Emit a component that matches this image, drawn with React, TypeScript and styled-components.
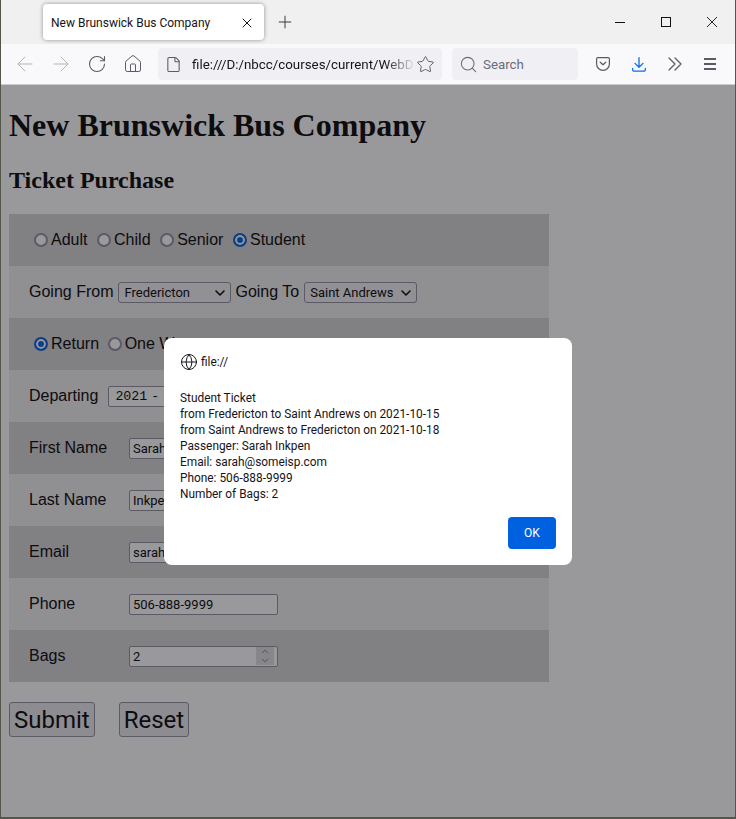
import React from "react";
import styled, { createGlobalStyle } from "styled-components";
import { ArrowLeft, ArrowRight, ChevronDown, ChevronUp, File, Globe, Home, Plus, RotateCw, Search, Star, X } from "lucide-react";

const UI_FONT = `Roboto, "Noto Sans", sans-serif`;

const GlobalStyle = createGlobalStyle`
  html, body {
    margin: 0;
    padding: 0;
    height: 819px;
    overflow: hidden;
    background: #55564a;
  }
`;

const Desktop = styled.div`
  display: flex;
  flex-direction: column;
  width: 734px;
  height: 817px;
  margin-left: 1px;
  overflow: hidden;
  background: #fff;
`;

const TabBar = styled.div`
  display: flex;
  align-items: center;
  flex: 0 0 44px;
  padding-left: 42px;
  background: #f0f0f0;
  color: #15141a;
  font: 12px ${UI_FONT};
`;

const Tab = styled.div`
  display: flex;
  align-items: center;
  justify-content: space-between;
  box-sizing: border-box;
  width: 221px;
  height: 36px;
  padding: 1px 9px 0 8px;
  background: #fff;
  border-radius: 4px;
  box-shadow: 0 0 4px rgba(0, 0, 0, 0.4);
`;

const NewTab = styled.div`
  display: flex;
  margin-left: 11px;
  color: #3c3b42;
`;

const WindowControls = styled.div`
  display: flex;
  align-items: center;
  gap: 36px;
  margin-left: auto;
  margin-right: 18px;
  color: #111;
`;

const Toolbar = styled.div`
  display: flex;
  align-items: center;
  flex: 0 0 40px;
  padding-left: 6px;
  background: #f9f9fb;
  border-bottom: 1px solid #ccc;
  color: #5b5b66;
  font: 13.33px ${UI_FONT};
`;

const NavButton = styled.div<{ $faded?: boolean }>`
  display: flex;
  align-items: center;
  justify-content: center;
  flex: 0 0 36px;
  color: ${(p) => (p.$faded ? "#b5b5ba" : "#5b5b66")};
`;

const UrlBar = styled.div`
  display: flex;
  align-items: center;
  box-sizing: border-box;
  width: 284px;
  height: 32px;
  margin-left: 7px;
  padding: 0 7px;
  background: #f0f0f4;
  border-radius: 4px;
`;

const UrlText = styled.span`
  flex: 1;
  margin-left: 10px;
  overflow: hidden;
  white-space: nowrap;
  color: #15141a;
  -webkit-mask-image: linear-gradient(to right, #000 86%, transparent 100%);
  mask-image: linear-gradient(to right, #000 86%, transparent 100%);
`;

const SearchBar = styled.div`
  display: flex;
  align-items: center;
  gap: 5px;
  box-sizing: border-box;
  width: 126px;
  height: 32px;
  margin-left: 10px;
  padding-left: 7px;
  background: #f0f0f4;
  border-radius: 4px;
  color: #6b6b75;
`;

const ToolIcons = styled.div`
  display: flex;
  align-items: center;
  gap: 22px;
  margin-left: 18px;
`;

const PageArea = styled.div`
  position: relative;
  flex: 1;
  padding: 0 8px;
  background: #fff;
  color: #000;
  overflow: hidden;
`;

const Heading = styled.h1`
  margin: 22px 0 22px;
  font: bold 32px/37px "Liberation Serif", serif;
`;

const SubHeading = styled.h2`
  margin: 0 0 20px;
  font: bold 24px/28px "Liberation Serif", serif;
`;

const Row = styled.div<{ $shaded?: boolean; $inset?: number }>`
  display: flex;
  align-items: center;
  box-sizing: border-box;
  width: 540px;
  height: 52px;
  padding-left: ${(p) => p.$inset ?? 20}px;
  background: ${(p) => (p.$shaded ? "#d3d3d3" : "#eee")};
  font: 16px "Liberation Sans", sans-serif;
  white-space: nowrap;
`;

const RadioLabel = styled.label<{ $gap?: number }>`
  display: inline-flex;
  align-items: center;
  margin-right: ${(p) => p.$gap ?? 9.6}px;
`;

const Radio = styled.input.attrs({ type: "radio" })`
  appearance: none;
  box-sizing: border-box;
  width: 14px;
  height: 14px;
  margin: 0 3px 0 0;
  background: #fff;
  border: 2px solid #8f8f9d;
  border-radius: 50%;

  &:checked {
    border-color: #0060df;
    background: #0060df;
    box-shadow: inset 0 0 0 2px #fff;
  }
`;

const FieldLabel = styled.span`
  width: 100px;
`;

const SelectWrap = styled.span<{ $width: number }>`
  position: relative;
  display: inline-flex;
  width: ${(p) => p.$width}px;
  margin: 0 4px 0 5px;
  color: #000;

  svg {
    position: absolute;
    right: 3px;
    top: 3px;
    pointer-events: none;
  }
`;

const Select = styled.select`
  appearance: none;
  box-sizing: border-box;
  width: 100%;
  height: 21px;
  padding: 0 0 0 5px;
  background: #f0f0f4;
  border: 1px solid #8f8f9d;
  border-radius: 3px;
  color: #000;
  font: 13px ${UI_FONT};
`;

const TextField = styled.input`
  box-sizing: border-box;
  width: 149px;
  height: 21px;
  padding: 0 3px;
  background: #fff;
  border: 1px solid #8f8f9d;
  border-radius: 2px;
  color: #000;
  font: 13px ${UI_FONT};
  outline: none;
`;

const DateField = styled(TextField)`
  width: 130px;
  margin-left: 10px;
  padding: 0 6px;
  font: 13.33px "Liberation Mono", monospace;
  word-spacing: -4px;
`;

const NumberBox = styled.span`
  display: inline-flex;
  align-items: center;
  box-sizing: border-box;
  width: 149px;
  height: 21px;
  padding-right: 3px;
  background: #fff;
  border: 1px solid #8f8f9d;
  border-radius: 2px;
`;

const NumberInput = styled.input`
  flex: 1;
  min-width: 0;
  padding: 0 3px;
  background: transparent;
  border: 0;
  color: #000;
  font: 13px ${UI_FONT};
  outline: none;
`;

const Spinner = styled.span`
  display: flex;
  flex-direction: column;
  align-items: center;
  justify-content: center;
  width: 18px;
  height: 18px;
  background: #dedee2;
  color: #5b5b66;

  svg {
    margin: -1px 0;
  }
`;

const Actions = styled.div`
  display: flex;
  gap: 24px;
  margin-top: 20px;
`;

const ActionButton = styled.button`
  box-sizing: border-box;
  height: 35px;
  padding: 1px 4px 0;
  background: #e9e9ed;
  border: 1px solid #8f8f9d;
  border-radius: 3px;
  color: #000;
  font: 24px ${UI_FONT};
`;

const Dimmer = styled.div`
  position: absolute;
  inset: 0;
  background: rgba(28, 27, 34, 0.45);
`;

const Dialog = styled.div`
  position: absolute;
  left: 163px;
  top: 253px;
  box-sizing: border-box;
  width: 408px;
  height: 227px;
  padding: 16px;
  background: #fff;
  border-radius: 8px;
  color: #15141a;
  font: 11.86px/16px ${UI_FONT};
`;

const DialogOrigin = styled.div`
  display: flex;
  align-items: center;
  gap: 3px;
  height: 16px;
`;

const DialogBody = styled.div`
  margin-top: 20px;
`;

const DialogActions = styled.div`
  display: flex;
  justify-content: flex-end;
  margin-top: 15px;
`;

const OkButton = styled.button`
  width: 48px;
  height: 32px;
  padding: 0;
  background: #0061e0;
  border: 0;
  border-radius: 4px;
  color: #fff;
  font: 12px ${UI_FONT};
`;

const MinimizeIcon = () => (
  <svg width="10" height="10" viewBox="0 0 10 10" stroke="currentColor" shapeRendering="crispEdges">
    <path d="M0 5.5h10" />
  </svg>
);

const MaximizeIcon = () => (
  <svg width="10" height="10" viewBox="0 0 10 10" fill="none" stroke="currentColor" shapeRendering="crispEdges">
    <rect x="0.5" y="0.5" width="9" height="9" />
  </svg>
);

const CloseIcon = () => (
  <svg width="10" height="10" viewBox="0 0 10 10" stroke="currentColor" strokeWidth="0.9">
    <path d="m0 0 10 10M10 0 0 10" />
  </svg>
);

const PocketIcon = () => (
  <svg width="14" height="14" viewBox="0 0 14 14" fill="none" stroke="currentColor" strokeWidth="1.2">
    <path d="M1.8.6h10.4a1.2 1.2 0 0 1 1.2 1.2V7A6.4 6.4 0 0 1 .6 7V1.8A1.2 1.2 0 0 1 1.8.6Z" />
    <path d="m4.2 5.2 2.8 2.6 2.8-2.6" strokeLinecap="round" strokeLinejoin="round" />
  </svg>
);

const DownloadIcon = () => (
  <svg width="14" height="15" viewBox="0 0 14 15" fill="none" stroke="#0a6cf0" strokeWidth="1.3" strokeLinecap="round" strokeLinejoin="round">
    <path d="M7 .7v9.4M3 6.4l4 3.8 4-3.8" />
    <path d="M.7 11.5v1.6a1 1 0 0 0 1 1h10.6a1 1 0 0 0 1-1v-1.6" />
  </svg>
);

const OverflowIcon = () => (
  <svg width="14" height="14" viewBox="0 0 14 14" fill="none" stroke="currentColor" strokeWidth="1.3" strokeLinecap="round" strokeLinejoin="round">
    <path d="m1 1 6 6-6 6M7 1l6 6-6 6" />
  </svg>
);

const MenuIcon = () => (
  <svg width="12" height="12" viewBox="0 0 12 12" stroke="currentColor" strokeWidth="1.2" shapeRendering="crispEdges">
    <path d="M0 1h12M0 6h12M0 11h12" />
  </svg>
);

const App = () => (
  <>
    <GlobalStyle />
    <Desktop>
      <TabBar>
        <Tab>
          <span>New Brunswick Bus Company</span>
          <X size={16} strokeWidth={1.5} />
        </Tab>
        <NewTab>
          <Plus size={20} strokeWidth={1.2} />
        </NewTab>
        <WindowControls>
          <MinimizeIcon />
          <MaximizeIcon />
          <CloseIcon />
        </WindowControls>
      </TabBar>
      <Toolbar>
        <NavButton $faded>
          <ArrowLeft size={24} strokeWidth={1} />
        </NavButton>
        <NavButton $faded>
          <ArrowRight size={24} strokeWidth={1} />
        </NavButton>
        <NavButton>
          <RotateCw size={20} strokeWidth={1.3} />
        </NavButton>
        <NavButton>
          <Home size={20} strokeWidth={1.2} />
        </NavButton>
        <UrlBar>
          <File size={17} strokeWidth={1.5} />
          <UrlText>file:///D:/nbcc/courses/current/WebD</UrlText>
          <Star size={19} strokeWidth={1.2} />
        </UrlBar>
        <SearchBar>
          <Search size={19} strokeWidth={1.3} />
          <span>Search</span>
        </SearchBar>
        <ToolIcons>
          <PocketIcon />
          <DownloadIcon />
          <OverflowIcon />
          <MenuIcon />
        </ToolIcons>
      </Toolbar>
      <PageArea>
        <Heading>New Brunswick Bus Company</Heading>
        <SubHeading>Ticket Purchase</SubHeading>
        <form onSubmit={(e) => e.preventDefault()}>
          <Row $shaded $inset={25}>
            <RadioLabel><Radio name="type" readOnly />Adult</RadioLabel>
            <RadioLabel><Radio name="type" readOnly />Child</RadioLabel>
            <RadioLabel><Radio name="type" readOnly />Senior</RadioLabel>
            <RadioLabel><Radio name="type" defaultChecked />Student</RadioLabel>
          </Row>
          <Row>
            Going From
            <SelectWrap $width={113}>
              <Select defaultValue="Fredericton">
                <option>Fredericton</option>
              </Select>
              <ChevronDown size={16} strokeWidth={2.4} />
            </SelectWrap>
            Going To
            <SelectWrap $width={113}>
              <Select defaultValue="Saint Andrews">
                <option>Saint Andrews</option>
              </Select>
              <ChevronDown size={16} strokeWidth={2.4} />
            </SelectWrap>
          </Row>
          <Row $shaded $inset={25}>
            <RadioLabel $gap={8.6}><Radio name="trip" defaultChecked />Return</RadioLabel>
            <RadioLabel><Radio name="trip" readOnly />One Way</RadioLabel>
          </Row>
          <Row>
            Departing
            <DateField defaultValue="2021 - 10 - 15" />
          </Row>
          <Row $shaded>
            <FieldLabel>First Name</FieldLabel>
            <TextField defaultValue="Sarah" />
          </Row>
          <Row>
            <FieldLabel>Last Name</FieldLabel>
            <TextField defaultValue="Inkpen" />
          </Row>
          <Row $shaded>
            <FieldLabel>Email</FieldLabel>
            <TextField defaultValue="sarah@someisp.com" />
          </Row>
          <Row>
            <FieldLabel>Phone</FieldLabel>
            <TextField defaultValue="506-888-9999" />
          </Row>
          <Row $shaded>
            <FieldLabel>Bags</FieldLabel>
            <NumberBox>
              <NumberInput defaultValue="2" />
              <Spinner>
                <ChevronUp size={12} strokeWidth={1.6} />
                <ChevronDown size={12} strokeWidth={1.6} />
              </Spinner>
            </NumberBox>
          </Row>
          <Actions>
            <ActionButton type="submit">Submit</ActionButton>
            <ActionButton type="reset">Reset</ActionButton>
          </Actions>
        </form>
        <Dimmer />
        <Dialog>
          <DialogOrigin>
            <Globe size={18} strokeWidth={1.3} />
            file://
          </DialogOrigin>
          <DialogBody>
            <div>Student Ticket</div>
            <div>from Fredericton to Saint Andrews on 2021-10-15</div>
            <div>from Saint Andrews to Fredericton on 2021-10-18</div>
            <div>Passenger: Sarah Inkpen</div>
            <div>Email: sarah@someisp.com</div>
            <div>Phone: 506-888-9999</div>
            <div>Number of Bags: 2</div>
          </DialogBody>
          <DialogActions>
            <OkButton>OK</OkButton>
          </DialogActions>
        </Dialog>
      </PageArea>
    </Desktop>
  </>
);

export default App;
